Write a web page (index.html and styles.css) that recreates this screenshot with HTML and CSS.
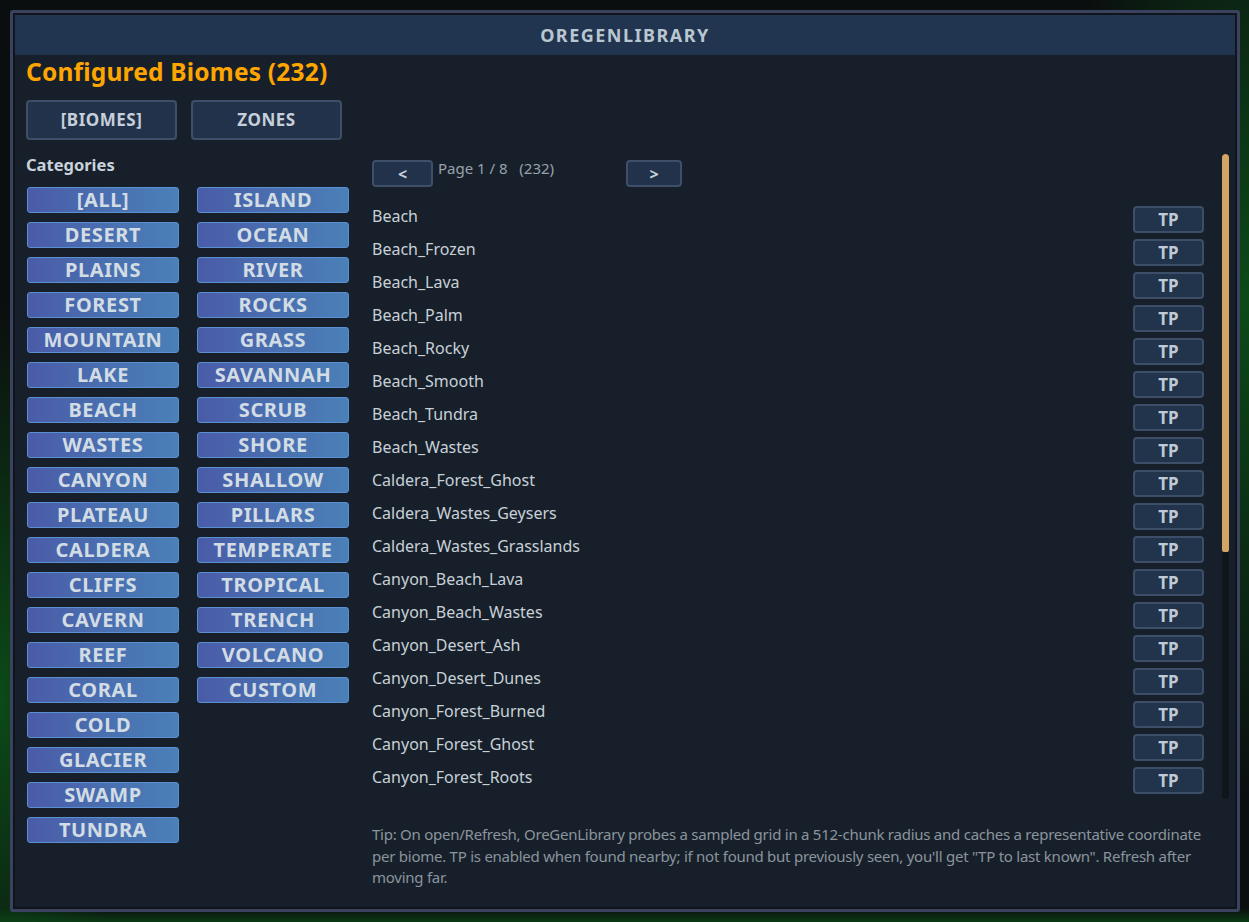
FILE: index.html
```html
<!DOCTYPE html>
<html lang="en">
<head>
    <meta charset="UTF-8">
    <title>OreGenLibrary</title>
    <link rel="stylesheet" href="styles.css">
</head>
<body>
    <div class="frame">
        <div class="panel">
            <div class="header">OREGENLIBRARY</div>

            <div class="content">
                <h1 class="title">Configured Biomes (232)</h1>

                <div class="tabs">
                    <button class="tab">[BIOMES]</button>
                    <button class="tab">ZONES</button>
                </div>

                <div class="lower">
                    <!-- Categories -->
                    <div class="sidebar">
                        <div class="cat-label">Categories</div>
                        <div class="cat-grid">
                            <button class="cat">[ALL]</button>
                            <button class="cat">ISLAND</button>
                            <button class="cat">DESERT</button>
                            <button class="cat">OCEAN</button>
                            <button class="cat">PLAINS</button>
                            <button class="cat">RIVER</button>
                            <button class="cat">FOREST</button>
                            <button class="cat">ROCKS</button>
                            <button class="cat">MOUNTAIN</button>
                            <button class="cat">GRASS</button>
                            <button class="cat">LAKE</button>
                            <button class="cat">SAVANNAH</button>
                            <button class="cat">BEACH</button>
                            <button class="cat">SCRUB</button>
                            <button class="cat">WASTES</button>
                            <button class="cat">SHORE</button>
                            <button class="cat">CANYON</button>
                            <button class="cat">SHALLOW</button>
                            <button class="cat">PLATEAU</button>
                            <button class="cat">PILLARS</button>
                            <button class="cat">CALDERA</button>
                            <button class="cat">TEMPERATE</button>
                            <button class="cat">CLIFFS</button>
                            <button class="cat">TROPICAL</button>
                            <button class="cat">CAVERN</button>
                            <button class="cat">TRENCH</button>
                            <button class="cat">REEF</button>
                            <button class="cat">VOLCANO</button>
                            <button class="cat">CORAL</button>
                            <button class="cat">CUSTOM</button>
                            <button class="cat">COLD</button>
                            <div></div>
                            <button class="cat">GLACIER</button>
                            <div></div>
                            <button class="cat">SWAMP</button>
                            <div></div>
                            <button class="cat">TUNDRA</button>
                        </div>
                    </div>

                    <!-- Biome list -->
                    <div class="main">
                        <div class="scroll-area">
                            <div class="scroll-content">
                                <div class="pager">
                                    <button class="page-btn">&lt;</button>
                                    <span class="page-info">Page 1 / 8&nbsp;&nbsp;&nbsp;(232)</span>
                                    <button class="page-btn">&gt;</button>
                                </div>

                                <div class="list">
                                    <div class="row"><span>Beach</span><button class="tp">TP</button></div>
                                    <div class="row"><span>Beach_Frozen</span><button class="tp">TP</button></div>
                                    <div class="row"><span>Beach_Lava</span><button class="tp">TP</button></div>
                                    <div class="row"><span>Beach_Palm</span><button class="tp">TP</button></div>
                                    <div class="row"><span>Beach_Rocky</span><button class="tp">TP</button></div>
                                    <div class="row"><span>Beach_Smooth</span><button class="tp">TP</button></div>
                                    <div class="row"><span>Beach_Tundra</span><button class="tp">TP</button></div>
                                    <div class="row"><span>Beach_Wastes</span><button class="tp">TP</button></div>
                                    <div class="row"><span>Caldera_Forest_Ghost</span><button class="tp">TP</button></div>
                                    <div class="row"><span>Caldera_Wastes_Geysers</span><button class="tp">TP</button></div>
                                    <div class="row"><span>Caldera_Wastes_Grasslands</span><button class="tp">TP</button></div>
                                    <div class="row"><span>Canyon_Beach_Lava</span><button class="tp">TP</button></div>
                                    <div class="row"><span>Canyon_Beach_Wastes</span><button class="tp">TP</button></div>
                                    <div class="row"><span>Canyon_Desert_Ash</span><button class="tp">TP</button></div>
                                    <div class="row"><span>Canyon_Desert_Dunes</span><button class="tp">TP</button></div>
                                    <div class="row"><span>Canyon_Forest_Burned</span><button class="tp">TP</button></div>
                                    <div class="row"><span>Canyon_Forest_Ghost</span><button class="tp">TP</button></div>
                                    <div class="row"><span>Canyon_Forest_Roots</span><button class="tp">TP</button></div>
                                </div>
                            </div>

                            <div class="scrollbar">
                                <div class="thumb"></div>
                            </div>
                        </div>

                        <p class="tip">Tip: On open/Refresh, OreGenLibrary probes a sampled grid in a 512-chunk radius and caches a representative coordinate per biome. TP is enabled when found nearby; if not found but previously seen, you'll get "TP to last known". Refresh after moving far.</p>
                    </div>
                </div>
            </div>
        </div>
    </div>
</body>
</html>
```

FILE: styles.css
```css
* {
    box-sizing: border-box;
    margin: 0;
    padding: 0;
    font-family: 'Noto Sans', 'Open Sans', sans-serif;
}

body {
    width: 1249px;
    height: 922px;
    overflow: hidden;
    padding: 10px 9px 10px 10px;
    background-color: #0b0e0f;
    background-image:
        radial-gradient(ellipse 120px 400px at 0 700px, #0c4a18 0%, rgba(12,74,24,0) 100%),
        radial-gradient(ellipse 200px 500px at 1249px 300px, #0c4a18 0%, rgba(12,74,24,0) 100%),
        linear-gradient(to top, #0b3a14 0px, rgba(11,58,20,0) 14px);
}

.frame {
    height: 902px;
    border: 3px solid #3b4260;
    border-radius: 3px;
    padding: 2px;
    background-color: #10151b;
}

.panel {
    height: 100%;
    background-color: #17202a;
    display: flex;
    flex-direction: column;
}

.header {
    height: 40px;
    background-color: #213551;
    color: #b9c7d0;
    font-size: 18px;
    font-weight: 700;
    letter-spacing: 1.5px;
    display: flex;
    align-items: center;
    justify-content: center;
    flex-shrink: 0;
}

.content {
    padding: 2px 11px 0 11px;
    flex: 1;
}

.title {
    color: #ffa500;
    font-size: 24.5px;
    font-weight: 700;
    line-height: 30px;
    letter-spacing: 0.2px;
}

.tabs {
    display: flex;
    gap: 14px;
    margin-top: 13px;
}

.tab {
    width: 151px;
    height: 40px;
    background-color: #22324a;
    border: 2px solid #3e4f69;
    border-radius: 4px;
    color: #c6cfda;
    font-size: 17px;
    font-weight: 700;
    letter-spacing: 0.5px;
    line-height: 20px;
    padding-bottom: 1px;
    cursor: pointer;
}

.lower {
    display: flex;
    margin-top: 12px;
}

/* Categories */
.sidebar {
    width: 346px;
    flex-shrink: 0;
}

.cat-label {
    color: #c9d2dc;
    font-size: 16.5px;
    font-weight: 700;
    line-height: 24px;
    margin-top: 1px;
}

.cat-grid {
    display: grid;
    grid-template-columns: 152px 152px;
    column-gap: 18px;
    row-gap: 9px;
    margin-top: 10px;
    padding-left: 1px;
}

.cat {
    height: 26px;
    background: linear-gradient(to right, #4a5ba8 0%, #4a6bae 40%, #4a80b8 100%);
    border: 1px solid #5a8fd2;
    border-radius: 3px;
    color: #d2dce4;
    font-size: 20px;
    font-weight: 700;
    line-height: 22px;
    letter-spacing: 0.6px;
    cursor: pointer;
}

/* Biome list */
.main {
    flex: 1;
}

.scroll-area {
    display: flex;
    height: 647px;
    padding-top: 2px;
    margin-right: -5px;
}

.scroll-content {
    flex: 1;
    overflow: hidden;
}

.pager {
    display: flex;
    align-items: flex-start;
    gap: 5px;
    margin-top: 6px;
}

.page-btn {
    width: 56px;
    height: 27px;
    background-color: #22324a;
    border: 2px solid #3e4f69;
    border-radius: 4px;
    color: #c9d2dc;
    font-size: 16px;
    font-weight: 700;
    cursor: pointer;
}

.page-btn:first-child {
    width: 61px;
}

.page-info {
    width: 183px;
    color: #98a1ab;
    font-size: 15px;
    line-height: 17px;
}

.list {
    margin-top: 16px;
}

.row {
    height: 33px;
    display: flex;
    align-items: center;
    justify-content: space-between;
    color: #c8d0d8;
    font-size: 16px;
}

.row span {
    margin-top: -7px;
}

.tp {
    width: 71px;
    height: 27px;
    background-color: #22334c;
    border: 2px solid #3d4e68;
    border-radius: 4px;
    color: #bfcad4;
    font-size: 17px;
    font-weight: 700;
    cursor: pointer;
}

.scrollbar {
    width: 7px;
    margin-left: 18px;
    background-color: #10161c;
    border-radius: 0 0 3px 3px;
}

.thumb {
    height: 398px;
    background-color: #d2a566;
    border-radius: 4px 4px 3px 3px;
}

.tip {
    margin-top: 25px;
    width: 842px;
    color: #8b949d;
    font-size: 15px;
    line-height: 21.5px;
    letter-spacing: -0.25px;
}
```
